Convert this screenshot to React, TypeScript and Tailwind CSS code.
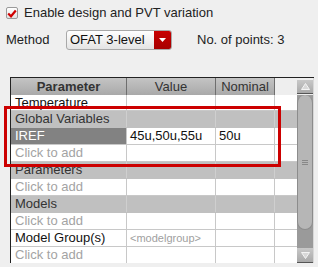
import { Fragment } from 'react'

interface Row {
  kind: 'section' | 'item' | 'add'
  name: string
  value?: string
  nominal?: string
  selected?: boolean
  placeholder?: boolean
  height?: number
}

const rows: Row[] = [
  { kind: 'item', name: 'Temperature', height: 16 },
  { kind: 'section', name: 'Global Variables' },
  { kind: 'item', name: 'IREF', value: '45u,50u,55u', nominal: '50u', selected: true },
  { kind: 'add', name: 'Click to add' },
  { kind: 'section', name: 'Parameters' },
  { kind: 'add', name: 'Click to add' },
  { kind: 'section', name: 'Models' },
  { kind: 'add', name: 'Click to add' },
  { kind: 'item', name: 'Model Group(s)', value: '<modelgroup>', placeholder: true },
  { kind: 'add', name: 'Click to add' },
]

function TableRow({ row }: { row: Row }) {
  const h = row.height === 16 ? 'h-[16px]' : 'h-[17px]'
  if (row.kind === 'section') {
    return (
      <div className={`flex ${h} bg-[#c0c0c0] border-b border-[#c0c0c0]`}>
        <div className="w-[116px] border-r border-[#cfcfcf] pl-[4px] leading-[16px] text-[#333]">
          {row.name}
        </div>
        <div className="w-[89px] border-r border-[#cfcfcf]" />
        <div className="w-[59px] border-r border-[#cfcfcf]" />
      </div>
    )
  }
  return (
    <div className={`flex ${h} border-b border-[#c8c8c8] bg-white`}>
      <div
        className={`w-[116px] border-r border-[#c8c8c8] pl-[4px] leading-[16px] ${
          row.selected ? 'bg-[#828282] text-white' : row.kind === 'add' ? 'text-[#a3a3a3]' : 'text-[#111]'
        }`}
      >
        {row.name}
      </div>
      <div
        className={`w-[89px] border-r border-[#c8c8c8] pl-[3px] leading-[16px] whitespace-nowrap overflow-hidden ${
          row.placeholder ? 'text-[11px] text-[#a0a0a0]' : 'text-[#111]'
        }`}
      >
        {row.value}
      </div>
      <div className="w-[59px] border-r border-[#c8c8c8] pl-[3px] leading-[16px] text-[#111]">
        {row.nominal}
      </div>
    </div>
  )
}

export default function App() {
  return (
    <div
      className="relative w-[318px] h-[267px] overflow-hidden bg-[#efefef] text-[13px] text-[#222]"
      style={{ fontFamily: '"Liberation Sans", Arial, sans-serif' }}
    >
      {/* enable checkbox */}
      <div className="flex items-center pl-[6px] pt-[6px] h-[20px]">
        <div className="w-[12px] h-[12px] border border-[#9a9a9a] bg-gradient-to-b from-white to-[#e2e2e2] rounded-[2px] flex items-center justify-center">
          <svg width="10" height="9" viewBox="0 0 10 9">
            <path d="M1.2 4.5 L4 7.3 L8.8 1.5" fill="none" stroke="#d00000" strokeWidth="2.2" />
          </svg>
        </div>
        <span className="ml-[6px]">Enable design and PVT variation</span>
      </div>

      {/* method row */}
      <div className="flex items-center mt-[10px] h-[20px]">
        <span className="pl-[6px] w-[66px]">Method</span>
        <div className="flex w-[106px] h-[20px] rounded-[3px] border border-[#a8a8a8] overflow-hidden bg-gradient-to-b from-white to-[#e4e4e4]">
          <span className="flex-1 pl-[3px] leading-[18px] text-[#111]">OFAT 3-level</span>
          <div className="w-[17px] bg-gradient-to-b from-[#c80000] to-[#a80000] flex items-center justify-center">
            <svg width="7" height="4" viewBox="0 0 7 4">
              <path d="M0 0 H7 L3.5 4 Z" fill="white" />
            </svg>
          </div>
        </div>
        <span className="ml-[25px]">No. of points: 3</span>
      </div>

      {/* table */}
      <div className="absolute left-[10px] top-[77px] w-[304px] h-[186px] border-l border-t border-[#222] flex">
        <div className="w-[286px] bg-white flex flex-col">
          <div className="flex h-[17px] bg-gradient-to-b from-[#c4c4c4] to-[#a9a9a9] text-[#333]">
            <div className="w-[116px] border-r border-[#6e6e6e] text-center font-bold leading-[17px]">Parameter</div>
            <div className="w-[89px] border-r border-[#6e6e6e] text-center leading-[17px]">Value</div>
            <div className="w-[59px] border-r border-[#6e6e6e] text-center leading-[17px]">Nominal</div>
            <div className="flex-1 bg-[#eeeeee]" />
          </div>
          <div className="flex-1 overflow-hidden">
            {rows.map((r, i) => (
              <Fragment key={i}>
                <TableRow row={r} />
              </Fragment>
            ))}
          </div>
        </div>

        {/* scrollbar */}
        <div className="w-[17px] flex flex-col bg-[#9a9a9a] border-r border-[#d8d8d8]">
          <div className="h-[17px] bg-[#eeeeee] flex flex-col">
            <div className="mt-[2px] h-[14px] bg-gradient-to-b from-[#c8c8c8] to-[#a9a9a9] border-b border-[#555] flex items-center justify-center">
              <svg width="9" height="7" viewBox="0 0 9 7">
                <path d="M4.5 0.5 L8.5 6.5 H0.5 Z" fill="#d8d8d8" stroke="#f4f4f4" />
              </svg>
            </div>
          </div>
          <div className="h-[135px] bg-[#b6b6b6] border-x border-b border-[#8c8c8c] rounded-t-[8px] rounded-b-[8px] flex items-center justify-center">
            <div className="flex flex-col gap-[1px]">
              <div className="w-[6px] h-px bg-[#888]" />
              <div className="w-[6px] h-px bg-[#888]" />
              <div className="w-[6px] h-px bg-[#888]" />
            </div>
          </div>
          <div className="flex-1" />
          <div className="h-[15px] bg-gradient-to-b from-[#c8c8c8] to-[#a9a9a9] border-b border-[#555] flex items-center justify-center">
            <svg width="9" height="7" viewBox="0 0 9 7">
              <path d="M0.5 0.5 H8.5 L4.5 6.5 Z" fill="#d8d8d8" stroke="#f4f4f4" />
            </svg>
          </div>
        </div>
      </div>

      {/* highlight box */}
      <div className="absolute left-[4px] top-[106px] w-[277px] h-[61px] border-[3px] border-[#cc0000]" />
    </div>
  )
}
